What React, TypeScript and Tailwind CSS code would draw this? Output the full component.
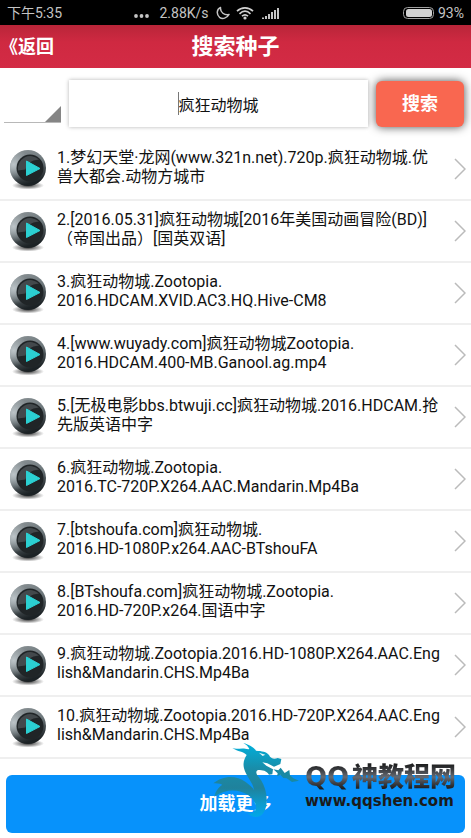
import React, { useState } from "react";

const results: string[][] = [
  ["1.梦幻天堂·龙网(www.321n.net).720p.疯狂动物城.优", "兽大都会.动物方城市"],
  ["2.[2016.05.31]疯狂动物城[2016年美国动画冒险(BD)]", "（帝国出品）[国英双语]"],
  ["3.疯狂动物城.Zootopia.", "2016.HDCAM.XVID.AC3.HQ.Hive-CM8"],
  ["4.[www.wuyady.com]疯狂动物城Zootopia.", "2016.HDCAM.400-MB.Ganool.ag.mp4"],
  ["5.[无极电影bbs.btwuji.cc]疯狂动物城.2016.HDCAM.抢", "先版英语中字"],
  ["6.疯狂动物城.Zootopia.", "2016.TC-720P.X264.AAC.Mandarin.Mp4Ba"],
  ["7.[btshoufa.com]疯狂动物城.", "2016.HD-1080P.x264.AAC-BTshouFA"],
  ["8.[BTshoufa.com]疯狂动物城.Zootopia.", "2016.HD-720P.x264.国语中字"],
  ["9.疯狂动物城.Zootopia.2016.HD-1080P.X264.AAC.Eng", "lish&Mandarin.CHS.Mp4Ba"],
  ["10.疯狂动物城.Zootopia.2016.HD-720P.X264.AAC.Eng", "lish&Mandarin.CHS.Mp4Ba"],
];

function StatusBar() {
  return (
    <div className="flex h-[25px] items-center bg-black px-[7px] text-sm text-[#c4c4c4]">
      <span className="flex-1">下午5:35</span>
      <div className="mr-[58px] flex items-center">
        <svg width="15" height="14" viewBox="0 0 15 14" fill="#c4c4c4" className="mr-[10px]">
          <circle cx="2" cy="10" r="1.9" />
          <circle cx="7.5" cy="10" r="1.9" />
          <circle cx="13" cy="10" r="1.9" />
        </svg>
        <span>2.88K/s</span>
        <svg width="14" height="14" viewBox="0 0 14 14" fill="none" stroke="#c4c4c4" strokeWidth="1.5" strokeLinejoin="round" className="ml-[7px]">
          <path d="M4.500 1.500C.5 3.300.3 8.500 3.500 11.300c3 2.200 7.500 1 9.500-2.800C8.500 9.500 4 6.500 4.500 1.500Z" />
        </svg>
        <svg width="18" height="14" viewBox="0 0 18 14" fill="none" stroke="#d0d0d0" strokeWidth="1.7" className="ml-[6px]">
          <path d="M1 5.200C5.500.8 12.500.8 17 5.200M3.500 7.800C7 4.500 11 4.500 14.500 7.800M6 10.200c2-1.800 4-1.800 6 0" />
          <circle cx="9" cy="12" r="1.600" fill="#d0d0d0" stroke="none" />
        </svg>
        <svg width="17" height="14" viewBox="0 0 17 14" fill="#c4c4c4" className="ml-2">
          <path d="M0 11.500h2V13H0zM3 10h2v3H3zM6 8h2v5H6zM9 6h2v7H9zM12 4h2v9h-2zM15 2h2v11h-2z" />
        </svg>
      </div>
      <div className="flex flex-1 items-center justify-end gap-1">
        <svg width="31" height="12" viewBox="0 0 31 12">
          <rect x="0.500" y="0.500" width="30" height="11" rx="4" fill="none" stroke="#a0a0a0" />
          <rect x="3" y="2" width="26" height="8" rx="2.500" fill="#d2d2d2" />
        </svg>
        <span>93%</span>
      </div>
    </div>
  );
}

function PlayIcon({ id }: { id: string }) {
  return (
    <svg width="38" height="42" viewBox="0 0 38 42" className="shrink-0" aria-hidden="true">
      <defs>
        <linearGradient id={`${id}-rim`} x1="0" y1="0" x2="0.300" y2="1">
          <stop offset="0" stopColor="#8c9396" />
          <stop offset="0.500" stopColor="#6d777b" />
          <stop offset="1" stopColor="#1c2225" />
        </linearGradient>
        <radialGradient id={`${id}-glow`} cx="0.100" cy="0.400" r="0.450">
          <stop offset="0" stopColor="#bcc4c8" />
          <stop offset="1" stopColor="#bcc4c8" stopOpacity="0" />
        </radialGradient>
        <radialGradient id={`${id}-shade`}>
          <stop offset="0" stopColor="#000" stopOpacity="0.800" />
          <stop offset="1" stopColor="#000" stopOpacity="0" />
        </radialGradient>
      </defs>
      <ellipse cx="19" cy="37.500" rx="16" ry="4" fill={`url(#${id}-shade)`} />
      <circle cx="19" cy="20" r="18" fill={`url(#${id}-rim)`} />
      <circle cx="19" cy="20" r="18" fill={`url(#${id}-glow)`} />
      <circle cx="21" cy="20" r="13.500" fill="#202527" />
      <path d="M9 22.500a12.500 12.500 0 0 1 21-11Q17.500 12.500 16.500 21.500Z" fill="#43494c" />
      <path d="M17.500 13v14.500L31 20.500Z" fill="#2bd0d2" stroke="#2bd0d2" strokeLinejoin="round" />
    </svg>
  );
}

function Watermark() {
  return (
    <div className="pointer-events-none absolute right-[15px] bottom-[15px] flex items-end" aria-hidden="true">
      <svg width="105" height="85" viewBox="0 0 315 255">
        <defs>
          <linearGradient id="dragon" gradientUnits="userSpaceOnUse" x1="0" y1="15" x2="0" y2="240">
            <stop offset="0" stopColor="#00b0dc" />
            <stop offset="0.350" stopColor="#1a8ca8" />
            <stop offset="0.600" stopColor="#1f829c" />
            <stop offset="0.800" stopColor="#0d9acb" />
            <stop offset="1" stopColor="#00a8ec" />
          </linearGradient>
        </defs>
        <path
          fill="url(#dragon)"
          d="M97 30C112 36 125 27 145 34L148 33C145 25 138 20 130 15C145 20 158 24 168 38C185 39 200 41 207 51C212 63 224 64 233 60L244 63L241 78L222 86L202 76L187 73L199 83L219 94L217 109L207 110C199 98 189 96 174 96C162 103 174 113 183 126C203 157 206 202 190 225C180 241 156 241 143 225C158 230 171 218 168 204C166 190 156 180 145 172C118 155 82 150 43 176C46 161 53 150 67 140C57 136 49 136 40 136C66 114 106 109 137 132C147 140 158 148 162 156C160 135 137 113 132 91C128 75 133 62 140 51C128 38 115 43 97 30Z"
        />
        <path
          fill="#1989a4"
          d="M220 94l15 3 7-8 12 16 14-9 2 16 10 9 17 7-21 4-16-11-10-1-9-10-10 5 2-9Z"
        />
        <path fill="#e7f7fa" d="M177 44l19 6-8 4Z" />
      </svg>
      <div className="mb-3 w-[151px] text-[#1b1b1b]">
        <div className="flex h-7 items-center justify-between bg-linear-to-b from-[#171717] via-[#656a73] to-[#111] bg-clip-text text-[26px] leading-7 font-black text-transparent">
          <span className="font-['DejaVu_Sans',sans-serif]">QQ</span>
          <span>神教程网</span>
        </div>
        <div className="font-['DejaVu_Sans',sans-serif] text-[15px] leading-5 font-bold">www.qqshen.com</div>
      </div>
    </div>
  );
}

export default function App() {
  const [query, setQuery] = useState("疯狂动物城");

  return (
    <div className="relative flex min-h-screen flex-col overflow-hidden bg-white font-[Roboto,'Noto_Sans_CJK_SC',sans-serif] text-[#111]">
      <StatusBar />
      <header className="grid h-[43px] grid-cols-[1fr_auto_1fr] items-center bg-linear-to-b from-[#b92539] via-[#cf2941] via-40% to-[#d32b45] text-white">
        <button type="button" className="justify-self-start text-lg font-bold">
          《返回
        </button>
        <h1 className="text-[22px] font-bold">搜索种子</h1>
      </header>

      <form className="flex h-[71px] items-center gap-2 pr-[7px] pl-1" onSubmit={(e) => e.preventDefault()}>
        <div className="relative h-[39px] w-[57px] self-center border-b border-[#b8b8b8]">
          <select aria-label="类型" className="h-full w-full appearance-none bg-transparent">
            <option value="" />
          </select>
          <svg width="16" height="16" viewBox="0 0 16 16" className="pointer-events-none absolute right-0 bottom-0">
            <path d="M16 0v16H0Z" fill="#858585" />
          </svg>
        </div>
        <div className="relative h-[47px] min-w-0 flex-1 bg-white shadow-[0_0_4px_rgba(0,0,0,0.3)]">
          <input
            aria-label="搜索"
            value={query}
            onChange={(e) => setQuery(e.target.value)}
            className="h-full w-full bg-transparent text-center text-base outline-none"
          />
          <span className="absolute top-3 left-1/2 -ml-[41px] h-[23px] w-px bg-[#777]" />
        </div>
        <button
          type="submit"
          className="h-[46px] w-[88px] rounded-md bg-[#f96750] text-lg font-bold text-white shadow-[0_0_10px_rgba(0,0,0,0.7)]"
        >
          搜索
        </button>
      </form>

      <ul>
        {results.map((lines, i) => (
          <li key={lines[0]} className="h-[62px] border-b-2 border-[#efefef]">
            <a href="#" className="flex h-full items-center pr-[5px] pl-[9px]">
              <PlayIcon id={`play-${i}`} />
              <span className="ml-[10px] min-w-0 flex-1 pb-1 text-base leading-[19px] whitespace-nowrap">
                {lines[0]}
                <br />
                {lines[1]}
              </span>
              <svg width="12" height="22" viewBox="0 0 12 22" fill="none" stroke="#bbb" strokeWidth="1.500">
                <path d="m1 1 10 10L1 21" />
              </svg>
            </a>
          </li>
        ))}
      </ul>

      <div className="px-[6px] pt-4 pb-[5px]">
        <button type="button" className="h-[58px] w-full rounded-md bg-[#0792fb] text-lg font-bold text-white">
          加载更多
        </button>
      </div>
      <Watermark />
    </div>
  );
}
